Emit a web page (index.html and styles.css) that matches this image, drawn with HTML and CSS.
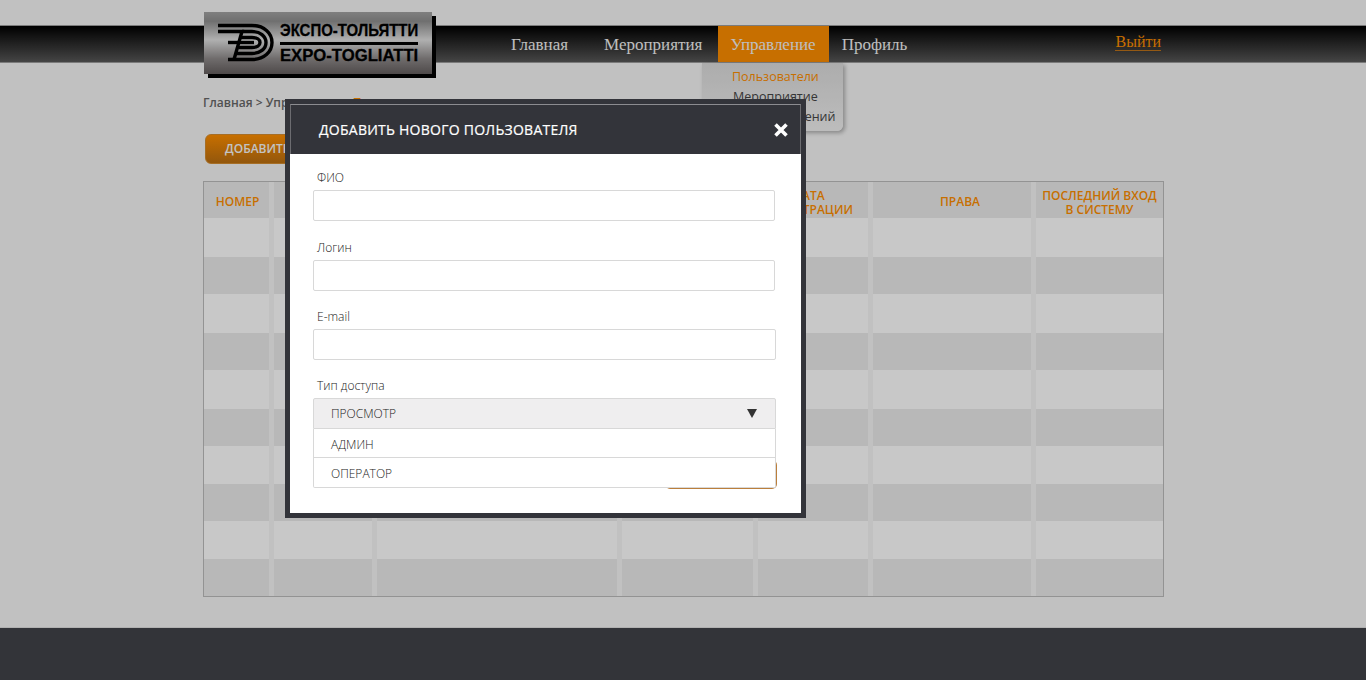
FILE: index.html
```html
<!DOCTYPE html>
<html lang="ru">
<head>
    <meta charset="UTF-8">
    <meta name="viewport" content="width=device-width, initial-scale=1.0">
    <title>Пользователи</title>
    <link rel="stylesheet" href="styles.css">
</head>
<body>
    <header class="navbar">
        <div class="wrap navbar-inner">
            <a class="logo" href="#">
                <svg class="logo-mark" width="60" height="40" viewBox="0 0 60 40" fill="none" stroke="#000" stroke-width="3.400">
                    <path d="M1 2.500H35C47 2.500 55 10 55 19.500C55 29 47 36.500 35 36.500H11"/>
                    <path d="M1 8.500H25L17 36.500"/>
                    <path d="M25 8.500H35C43 8.500 49 13 49 19.500C49 26 43 30.500 35 30.500H20"/>
                    <path d="M23 14.500H35C40 14.500 43 16.500 43 19.500C43 22.500 40 24.500 35 24.500H21.500"/>
                    <path d="M11 19.500H37"/>
                </svg>
                <span class="logo-text">
                    <span class="logo-ru">ЭКСПО-ТОЛЬЯТТИ</span>
                    <span class="logo-line"></span>
                    <span class="logo-en">EXPO-TOGLIATTI</span>
                </span>
            </a>
            <nav class="menu">
                <a class="menu-item menu-first" href="#">Главная</a>
                <a class="menu-item" href="#">Мероприятия</a>
                <div class="menu-drop">
                    <a class="menu-item active" href="#">Управление</a>
                    <div class="submenu">
                        <a class="current" href="#">Пользователи</a>
                        <a href="#">Мероприятие</a>
                        <a href="#">Журнал сообщений</a>
                    </div>
                </div>
                <a class="menu-item" href="#">Профиль</a>
            </nav>
            <a class="logout" href="#">Выйти</a>
        </div>
    </header>

    <main class="wrap content">
        <div class="breadcrumbs">Главная &gt; Управление &gt; <span class="crumb-current">Пользователи</span></div>
        <button class="add-btn">ДОБАВИТЬ ПОЛЬЗОВАТЕЛЯ</button>
        <table class="users">
            <colgroup>
                <col class="c1"><col class="c2"><col class="c3"><col class="c4"><col class="c5"><col class="c6"><col class="c7">
            </colgroup>
            <thead>
                <tr>
                    <th class="th-num">НОМЕР</th>
                    <th>ЛОГИН</th>
                    <th>ФИО</th>
                    <th>E-MAIL</th>
                    <th class="th-date">ДАТА<br>РЕГИСТРАЦИИ</th>
                    <th class="th-rights">ПРАВА</th>
                    <th>ПОСЛЕДНИЙ ВХОД<br>В СИСТЕМУ</th>
                </tr>
            </thead>
            <tbody>
                <tr><td></td><td></td><td></td><td></td><td></td><td></td><td></td></tr>
                <tr><td></td><td></td><td></td><td></td><td></td><td></td><td></td></tr>
                <tr><td></td><td></td><td></td><td></td><td></td><td></td><td></td></tr>
                <tr><td></td><td></td><td></td><td></td><td></td><td></td><td></td></tr>
                <tr><td></td><td></td><td></td><td></td><td></td><td></td><td></td></tr>
                <tr><td></td><td></td><td></td><td></td><td></td><td></td><td></td></tr>
                <tr><td></td><td></td><td></td><td></td><td></td><td></td><td></td></tr>
                <tr><td></td><td></td><td></td><td></td><td></td><td></td><td></td></tr>
                <tr><td></td><td></td><td></td><td></td><td></td><td></td><td></td></tr>
                <tr><td></td><td></td><td></td><td></td><td></td><td></td><td></td></tr>
            </tbody>
        </table>
    </main>

    <footer class="footer"></footer>

    <div class="overlay"></div>

    <div class="modal">
        <div class="modal-head">
            <h2>ДОБАВИТЬ НОВОГО ПОЛЬЗОВАТЕЛЯ</h2>
            <svg class="modal-close" width="14" height="14" viewBox="0 0 14 14" stroke="#fff" stroke-width="3.600">
                <path d="M1.500 1.500L12.500 12.500M12.500 1.500L1.500 12.500"/>
            </svg>
        </div>
        <form class="modal-body">
            <label class="field-label">ФИО</label>
            <input class="field field-first" type="text">
            <label class="field-label">Логин</label>
            <input class="field" type="text">
            <label class="field-label">E-mail</label>
            <input class="field field-wide" type="text">
            <label class="field-label">Тип доступа</label>
            <div class="select">
                <div class="select-value">
                    ПРОСМОТР
                    <svg width="10" height="9" viewBox="0 0 10 9" fill="#333"><path d="M0 0H10L5 9Z"/></svg>
                </div>
                <div class="select-list">
                    <div class="select-option">АДМИН</div>
                    <div class="select-option">ОПЕРАТОР</div>
                </div>
            </div>
            <div class="modal-actions">
                <button class="save-btn" type="button">СОХРАНИТЬ</button>
            </div>
        </form>
    </div>
</body>
</html>
```

FILE: styles.css
```css
* {
    box-sizing: border-box;
}

html, body {
    height: 100%;
}

body {
    margin: 0;
    background-color: #f2f2f2;
    color: #666;
    font-family: "Open Sans", sans-serif;
    display: flex;
    flex-direction: column;
}

a {
    text-decoration: none;
}

.wrap {
    width: 960px;
    margin: 0 auto;
}

/* top bar */
.navbar {
    flex: none;
    height: 38px;
    margin-top: 25px;
    background: linear-gradient(#000, #565656);
    border-top: 1px solid #9a9a9a;
    border-bottom: 1px solid #9a9a9a;
}

.navbar-inner {
    display: flex;
    height: 36px;
}

.logo {
    flex: none;
    display: flex;
    align-items: center;
    width: 228px;
    height: 62px;
    margin: -14px 0 0 1px;
    padding-left: 13px;
    background: linear-gradient(#a0a0a0, #8c8c8c 15%, #dcdcdc 45%, #8c8888 75%, #625c5c);
    box-shadow: 4px 4px 0 #000;
    color: #000;
}

.logo-mark {
    flex: none;
}

.logo-text {
    display: flex;
    flex-direction: column;
    width: 138px;
    margin-left: 3px;
    font-family: "Liberation Sans", sans-serif;
    font-weight: bold;
    font-size: 17px;
    line-height: 16px;
    white-space: nowrap;
    -webkit-text-stroke: 0.300px #000;
}

.logo-ru {
    transform: scaleX(0.88);
    transform-origin: left;
}

.logo-line {
    height: 3px;
    margin: 3px 0;
    background-color: #000;
}

.logo-en {
    transform: scaleX(0.98);
    transform-origin: left;
}

.menu {
    display: flex;
    margin-left: 66px;
    font-family: "Liberation Serif", serif;
    font-size: 17px;
}

.menu-item {
    display: block;
    height: 36px;
    padding: 0 13px;
    line-height: 37px;
    color: #eee;
}

.menu-first {
    margin-right: 10px;
}

.menu-item.active {
    padding-left: 12px;
    background-color: #f98b00;
}

.menu-drop {
    position: relative;
    margin-left: 3px;
}

.submenu {
    position: absolute;
    top: 37px;
    left: -16px;
    width: 141px;
    height: 68px;
    padding-top: 4px;
    background: linear-gradient(#d8d8d8, #ececec);
    border-radius: 0 0 6px 6px;
    box-shadow: 2px 2px 4px rgba(0, 0, 0, 0.3);
    text-align: center;
    font-family: "Open Sans", sans-serif;
    font-size: 12.500px;
    line-height: 20px;
    white-space: nowrap;
}

.submenu a {
    display: block;
    color: #444;
    padding-left: 5px;
}

.submenu a.current {
    color: #f98b00;
}

.logout {
    margin: 7px 2px 0 auto;
    height: 18px;
    border-bottom: 1px solid #b9701a;
    font-family: "Liberation Serif", serif;
    font-size: 16px;
    line-height: 18px;
    color: #f98b00;
}

/* page */
.content {
    flex: none;
}

.breadcrumbs {
    margin-top: 31px;
    font-size: 12px;
    font-weight: 600;
    line-height: 18px;
    color: #666;
}

.crumb-current {
    color: #f98b00;
}

.add-btn {
    display: block;
    height: 30px;
    margin: 22px 0 0 2px;
    padding: 0 19px 2px;
    background: linear-gradient(#f98b00, #b86d10);
    border: 1px solid #d08a30;
    border-radius: 6px;
    color: #f4f4f4;
    font-family: "Open Sans", sans-serif;
    font-size: 12px;
    font-weight: 600;
}

.users {
    width: 961px;
    margin-top: 17px;
    border-collapse: separate;
    border-spacing: 0;
    table-layout: fixed;
    border: 1px solid #b8b8b8;
}

.c1 { width: 70px; }
.c2 { width: 103px; }
.c3 { width: 245px; }
.c4 { width: 136px; }
.c5 { width: 115px; }
.c6 { width: 163px; }
.c7 { width: 127px; }

.users th {
    height: 36px;
    padding: 5px 0 0;
    background-color: #e7e7e7;
    color: #f98b00;
    font-size: 12px;
    font-weight: 600;
    line-height: 14px;
    border-right: 5px solid #f2f2f2;
}

.users th.th-num {
    padding-left: 2px;
    padding-top: 4px;
}

.users th.th-date {
    padding-right: 8px;
}

.users th.th-rights {
    padding-left: 16px;
    padding-top: 4px;
}

.users td {
    height: 39px;
    padding: 0;
    border-right: 5px solid #f2f2f2;
}

.users th:last-child, .users td:last-child {
    border-right: 0;
}

.users tbody tr:nth-child(odd) td {
    background-color: #fafafa;
}

.users tbody tr:nth-child(even) td {
    height: 37px;
    background-color: #e7e7e7;
}

.users tbody tr:nth-child(n+7):nth-child(odd) td {
    height: 38px;
}

.footer {
    flex: none;
    height: 53px;
    margin-top: auto;
    background-color: #404148;
    border-top: 1px solid #ddd;
}

/* modal */
.overlay {
    position: fixed;
    top: 0;
    left: 0;
    right: 0;
    bottom: 0;
    background-color: rgba(0, 0, 0, 0.2);
}

.modal {
    position: absolute;
    top: 99px;
    left: 285px;
    width: 521px;
    height: 419px;
    background-color: #fff;
    border: 5px solid #33343a;
    color: #444;
}

.modal-head {
    display: flex;
    justify-content: space-between;
    align-items: center;
    height: 50px;
    padding: 0 12px 0 28px;
    background-color: #33343a;
    border-top: 1px solid #8c8c90;
    border-left: 1px solid #6c6c70;
    border-right: 1px solid #6c6c70;
}

.modal-head h2 {
    margin: 0;
    font-size: 14px;
    font-weight: 500;
    letter-spacing: 0.250px;
    color: #fff;
    -webkit-text-stroke: 0.200px #fff;
}

.modal-body {
    display: flex;
    flex-direction: column;
    align-items: flex-start;
    padding: 15px 25px 0 23px;
}

.field-label {
    display: block;
    padding-left: 4px;
    height: 21px;
    font-size: 12px;
    font-weight: 300;
    line-height: 17px;
    color: #222;
}

.field {
    display: block;
    width: 462px;
    height: 31px;
    margin-bottom: 17px;
    border: 1px solid #d8d8d8;
    border-radius: 2px;
    background: #fff;
}

.field-first {
    margin-bottom: 18px;
}

.field-wide {
    width: 463px;
}

.select {
    position: relative;
    width: 463px;
    height: 31px;
    font-size: 12px;
    font-weight: 300;
    color: #222;
}

.select-value {
    display: flex;
    justify-content: space-between;
    align-items: center;
    height: 31px;
    padding: 0 18px 0 17px;
    background-color: #efeeef;
    border: 1px solid #d8d8d8;
    border-radius: 2px 2px 0 0;
}

.select-list {
    position: absolute;
    top: 31px;
    left: 0;
    right: 0;
    background-color: #fff;
    border: 1px solid #d8d8d8;
    border-top: 0;
    border-radius: 0 0 2px 2px;
}

.select-option {
    height: 29px;
    padding: 1px 0 0 17px;
    line-height: 29px;
    border-bottom: 1px solid #d8d8d8;
}

.select-option:last-child {
    border-bottom: 0;
}

.modal-actions {
    display: flex;
    justify-content: flex-end;
    width: 464px;
    margin-top: 31px;
}

.save-btn {
    width: 112px;
    height: 29px;
    background: #fff;
    border: 1px solid #bb7f3c;
    border-width: 1px 2px 2px 1px;
    border-radius: 5px;
    color: #bb7f3c;
    font-family: "Open Sans", sans-serif;
    font-size: 13px;
}
```
